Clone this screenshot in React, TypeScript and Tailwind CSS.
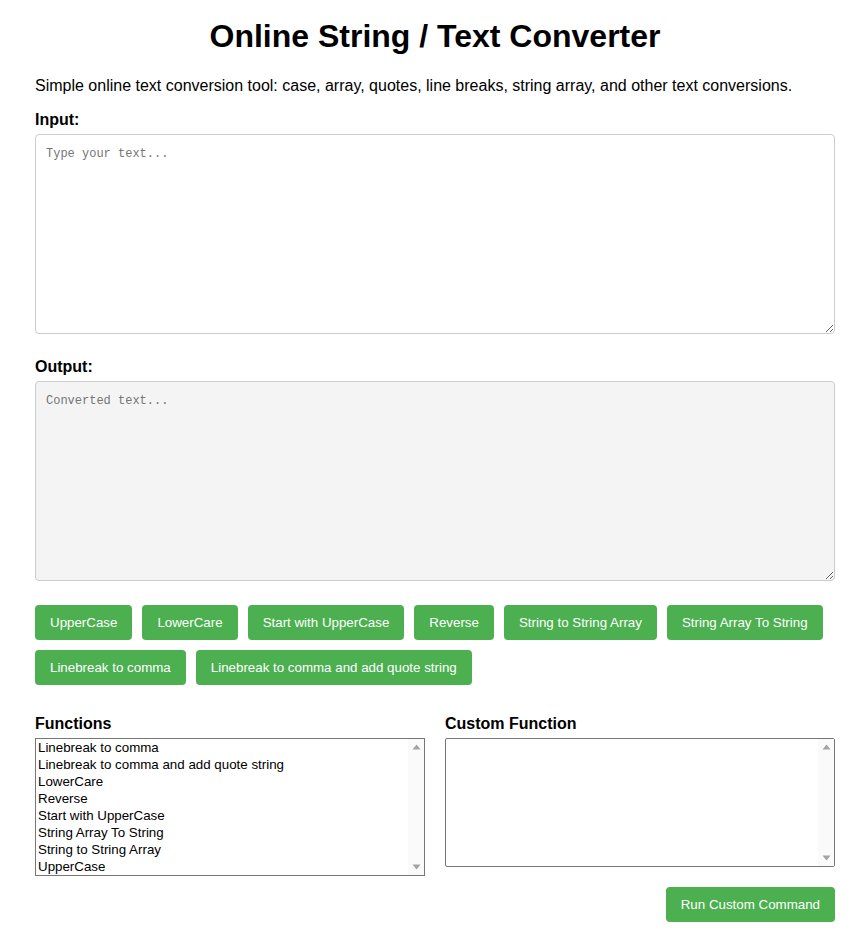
import React from "react";

const buttons = [
  "UpperCase",
  "LowerCare",
  "Start with UpperCase",
  "Reverse",
  "String to String Array",
  "String Array To String",
  "Linebreak to comma",
  "Linebreak to comma and add quote string",
];

const functions = [
  "Linebreak to comma",
  "Linebreak to comma and add quote string",
  "LowerCare",
  "Reverse",
  "Start with UpperCase",
  "String Array To String",
  "String to String Array",
  "UpperCase",
];

function ScrollStrip() {
  return (
    <div className="w-[16px] shrink-0 bg-[#fafafa] flex flex-col justify-between items-center py-[5px]">
      <svg width="9" height="6" viewBox="0 0 9 6">
        <path d="M0.5 5.5 L4.5 0.5 L8.5 5.5 Z" fill="#a3a3a3" />
      </svg>
      <svg width="9" height="6" viewBox="0 0 9 6">
        <path d="M0.5 0.5 L4.5 5.5 L8.5 0.5 Z" fill="#a3a3a3" />
      </svg>
    </div>
  );
}

function App() {
  return (
    <div className="bg-white min-h-screen font-['Liberation_Sans',Arial,sans-serif] text-black">
      <div className="w-[800px] ml-[35px] pt-[18px] pb-[27px]">
        <h1 className="text-[32px] leading-[37px] font-bold text-center">Online String / Text Converter</h1>

        <p className="mt-[22px] text-[16px] leading-[18px]">
          Simple online text conversion tool: case, array, quotes, line breaks, string array, and other text conversions.
        </p>

        <label className="block mt-[16px] text-[16px] leading-[18px] font-bold">Input:</label>
        <textarea
          placeholder="Type your text..."
          className="block mt-[5px] w-full h-[200px] border border-[#cccccc] rounded-[4px] p-[10px] font-['Liberation_Mono',monospace] text-[12px] leading-[18px] placeholder:text-[#757575] resize-y outline-none"
        />

        <label className="block mt-[24px] text-[16px] leading-[18px] font-bold">Output:</label>
        <textarea
          readOnly
          placeholder="Converted text..."
          className="block mt-[5px] w-full h-[200px] border border-[#cccccc] rounded-[4px] p-[10px] bg-[#f4f4f4] font-['Liberation_Mono',monospace] text-[12px] leading-[18px] placeholder:text-[#757575] resize-y outline-none"
        />

        <div className="mt-[24px] flex flex-wrap gap-[10px]">
          {buttons.map((b) => (
            <button
              key={b}
              className="h-[35px] px-[15px] bg-[#4caf50] text-white text-[13.33px] rounded-[4px]"
            >
              {b}
            </button>
          ))}
        </div>

        <div className="mt-[30px] grid grid-cols-2 gap-[20px]">
          <div>
            <h3 className="text-[16px] leading-[18px] font-bold">Functions</h3>
            <div className="mt-[5px] flex h-[138px] border border-[#767676] bg-white">
              <ul className="flex-1 text-[13.33px] leading-[17px] overflow-hidden">
                {functions.map((f) => (
                  <li key={f} className="px-[2px] h-[17px] cursor-default">
                    {f}
                  </li>
                ))}
              </ul>
              <ScrollStrip />
            </div>
          </div>
          <div>
            <h3 className="text-[16px] leading-[18px] font-bold">Custom Function</h3>
            <div className="mt-[5px] flex h-[129px] border border-[#767676] rounded-[2px] bg-white">
              <textarea className="flex-1 h-full p-[2px] text-[13.33px] font-['Liberation_Mono',monospace] resize-none outline-none overflow-hidden" />
              <ScrollStrip />
            </div>
            <div className="flex justify-end mt-[20px]">
              <button className="h-[35px] px-[15px] bg-[#4caf50] text-white text-[13.33px] rounded-[4px]">
                Run Custom Command
              </button>
            </div>
          </div>
        </div>
      </div>
    </div>
  );
}

export default App;
